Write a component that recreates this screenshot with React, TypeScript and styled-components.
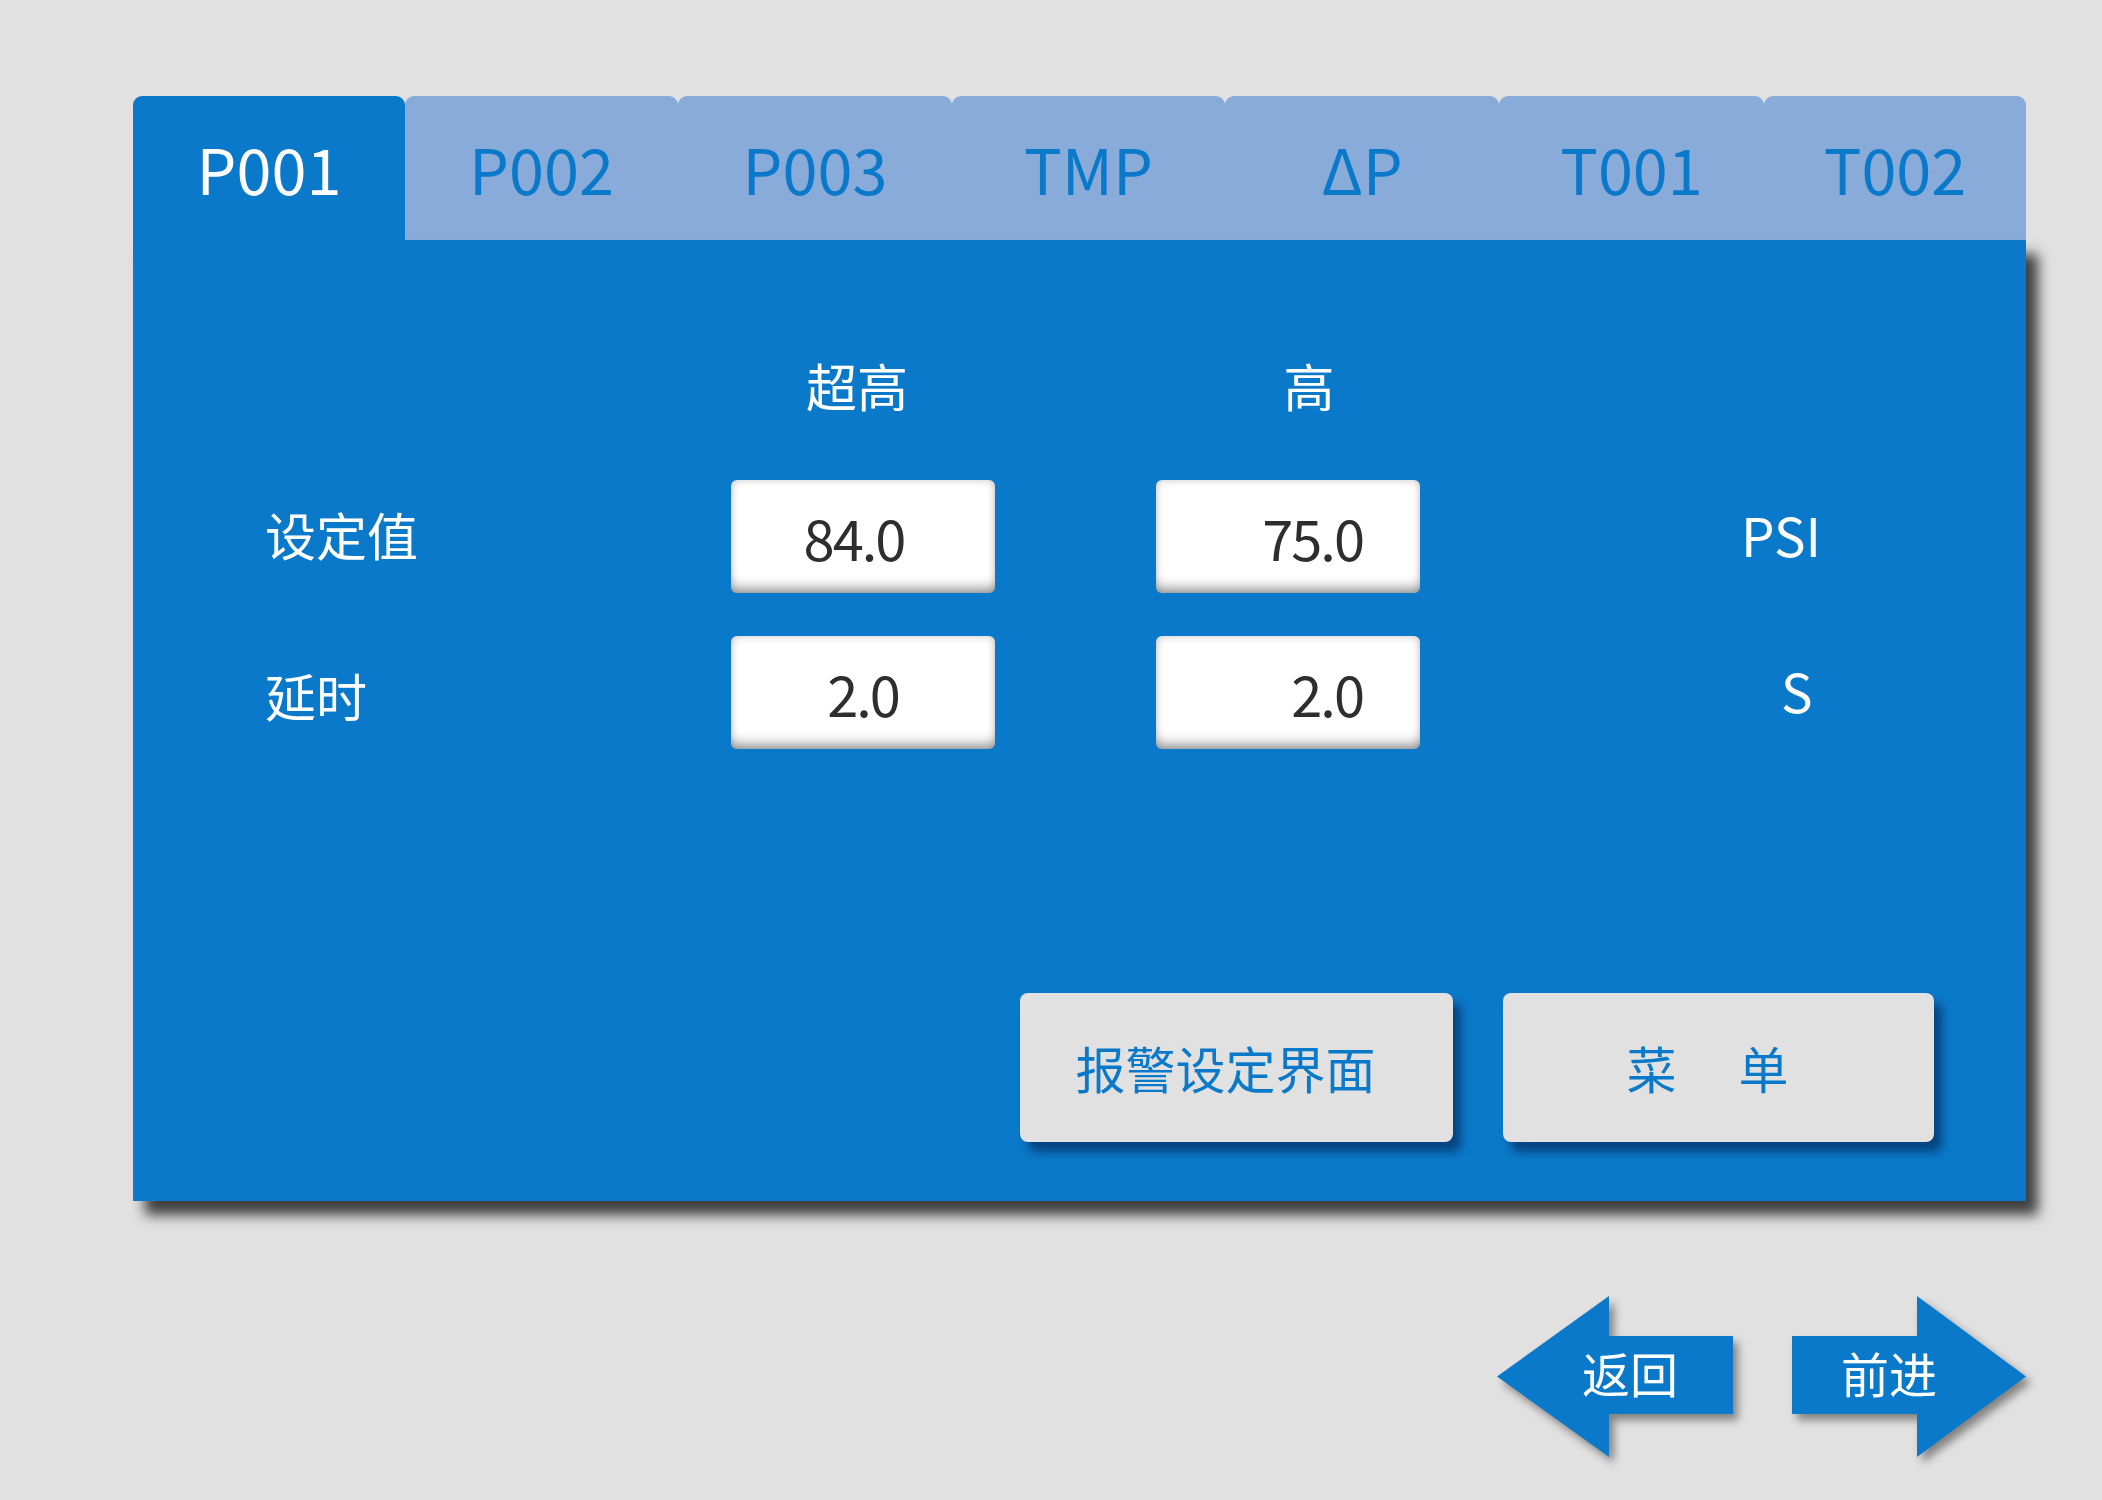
import React from "react";
import styled, { createGlobalStyle } from "styled-components";

const GlobalStyle = createGlobalStyle`
  html, body {
    margin: 0;
    padding: 0;
    background: #e1e1e1;
  }
  body {
    font-family: "Noto Sans CJK SC", "Noto Sans", sans-serif;
  }
  * { box-sizing: border-box; }
`;

const BLUE = "#0b79c9";
const TAB_LIGHT = "#89abd9";

const Page = styled.div`
  width: 2102px;
  height: 1500px;
  padding: 96px 0 0 133px;
  background: #e1e1e1;
`;

const Panel = styled.div`
  width: 1893px;
  display: flex;
  flex-direction: column;
`;

const TabBar = styled.div`
  display: flex;
  height: 144px;
`;

const Tab = styled.div<{ $active?: boolean; $w: number }>`
  width: ${(p) => p.$w}px;
  flex: none;
  display: flex;
  align-items: center;
  justify-content: center;
  border-radius: 9px 9px 0 0;
  background: ${(p) => (p.$active ? BLUE : TAB_LIGHT)};
  color: ${(p) => (p.$active ? "#ffffff" : BLUE)};
  font-size: 63px;
  line-height: 1;
  padding-bottom: 2px;
`;

const Body = styled.div`
  height: 961px;
  background: ${BLUE};
  box-shadow: 12px 14px 12px rgba(0, 0, 0, 0.72);
  padding: 113px 92px 59px 132px;
  display: flex;
  flex-direction: column;
  justify-content: space-between;
`;

const Grid = styled.div`
  display: grid;
  grid-template-columns: 466px 425px 425px 1fr;
  grid-template-rows: 84px 113px 113px;
  row-gap: 43px;
`;

const ColHeader = styled.div<{ $col: number; $shift: number }>`
  grid-column: ${(p) => p.$col};
  grid-row: 1;
  width: 264px;
  align-self: start;
  height: 64px;
  line-height: 64px;
  text-align: center;
  color: #ffffff;
  font-size: 51px;
  transform: translateX(${(p) => p.$shift}px);
`;

const RowLabel = styled.div<{ $row: number }>`
  grid-column: 1;
  grid-row: ${(p) => p.$row};
  align-self: center;
  color: #ffffff;
  font-size: 51px;
  line-height: 1;
  padding-bottom: ${(p) => (p.$row === 3 ? 0 : 4)}px;
  padding-top: ${(p) => (p.$row === 3 ? 6 : 0)}px;
`;

const ValueBox = styled.div<{ $col: number; $row: number; $align: "center" | "right"; $pad: number }>`
  grid-column: ${(p) => p.$col};
  grid-row: ${(p) => p.$row};
  width: 264px;
  height: 113px;
  background: #ffffff;
  border-radius: 6px;
  box-shadow: inset 0 -12px 12px -6px rgba(0, 0, 0, 0.32),
    inset 0 0 9px rgba(0, 0, 0, 0.22);
  display: flex;
  align-items: center;
  justify-content: ${(p) => (p.$align === "center" ? "center" : "flex-end")};
  padding: 0 ${(p) => p.$pad}px 0 0;
  color: #2e2e2e;
  font-size: 56px;
  letter-spacing: -2px;
  line-height: 1;
`;

const Unit = styled.div<{ $row: number; $indent: number }>`
  grid-column: 4;
  grid-row: ${(p) => p.$row};
  align-self: center;
  padding-left: ${(p) => p.$indent}px;
  padding-bottom: 4px;
  color: #ffffff;
  font-size: 53px;
  line-height: 1;
`;

const ButtonRow = styled.div`
  display: flex;
  justify-content: flex-end;
  gap: 50px;
`;

const ActionButton = styled.button<{ $w: number }>`
  width: ${(p) => p.$w}px;
  height: 149px;
  border: none;
  border-radius: 8px;
  background: #e1e1e1;
  box-shadow: 8px 10px 10px rgba(0, 25, 70, 0.55);
  color: ${BLUE};
  font-family: "Noto Sans CJK SC", "Noto Sans", sans-serif;
  font-size: 50px;
  line-height: 1;
  display: flex;
  align-items: center;
  justify-content: center;
  padding: 0 22px 2px 0;
  cursor: pointer;
`;

const Gap = styled.span`
  display: inline-block;
  width: 62px;
`;

const NavRow = styled.div`
  width: 1893px;
  margin-top: 95px;
  display: flex;
  justify-content: flex-end;
  gap: 59px;
`;

const ArrowWrap = styled.div`
  filter: drop-shadow(5px 6px 4px rgba(0, 0, 0, 0.42));
`;

const ArrowShape = styled.div<{ $dir: "left" | "right" }>`
  width: ${(p) => (p.$dir === "left" ? 236 : 234)}px;
  height: 161px;
  background: ${BLUE};
  clip-path: ${(p) =>
    p.$dir === "left"
      ? "polygon(0 80.5px, 112px 0, 112px 40px, 236px 40px, 236px 118px, 112px 118px, 112px 161px)"
      : "polygon(0 40px, 125px 40px, 125px 0, 234px 80.5px, 125px 161px, 125px 118px, 0 118px)"};
  display: flex;
  align-items: center;
  justify-content: center;
  padding: ${(p) => (p.$dir === "left" ? "0 0 10px 30px" : "0 40px 10px 0")};
  color: #ffffff;
  font-size: 48px;
  line-height: 1;
  cursor: pointer;
`;

const tabs: { label: string; w: number }[] = [
  { label: "P001", w: 272 },
  { label: "P002", w: 273 },
  { label: "P003", w: 274 },
  { label: "TMP", w: 273 },
  { label: "ΔP", w: 274 },
  { label: "T001", w: 265 },
  { label: "T002", w: 262 },
];

export default function App() {
  return (
    <>
      <GlobalStyle />
      <Page>
        <Panel>
          <TabBar>
            {tabs.map((t, i) => (
              <Tab key={t.label} $active={i === 0} $w={t.w}>
                {t.label}
              </Tab>
            ))}
          </TabBar>
          <Body>
            <Grid>
              <ColHeader $col={2} $shift={-6}>
                超高
              </ColHeader>
              <ColHeader $col={3} $shift={21}>
                高
              </ColHeader>

              <RowLabel $row={2}>设定值</RowLabel>
              <ValueBox $col={2} $row={2} $align="center" $pad={18}>
                84.0
              </ValueBox>
              <ValueBox $col={3} $row={2} $align="right" $pad={57}>
                75.0
              </ValueBox>
              <Unit $row={2} $indent={160}>
                PSI
              </Unit>

              <RowLabel $row={3}>延时</RowLabel>
              <ValueBox $col={2} $row={3} $align="center" $pad={0}>
                2.0
              </ValueBox>
              <ValueBox $col={3} $row={3} $align="right" $pad={57}>
                2.0
              </ValueBox>
              <Unit $row={3} $indent={200}>
                S
              </Unit>
            </Grid>
            <ButtonRow>
              <ActionButton $w={433}>报警设定界面</ActionButton>
              <ActionButton $w={431}>
                菜<Gap />单
              </ActionButton>
            </ButtonRow>
          </Body>
        </Panel>
        <NavRow>
          <ArrowWrap>
            <ArrowShape $dir="left">返回</ArrowShape>
          </ArrowWrap>
          <ArrowWrap>
            <ArrowShape $dir="right">前进</ArrowShape>
          </ArrowWrap>
        </NavRow>
      </Page>
    </>
  );
}
